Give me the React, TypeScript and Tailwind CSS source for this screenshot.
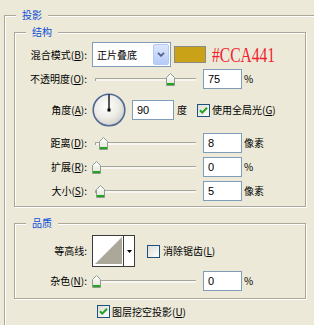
import type { ReactNode } from 'react'

const CJK = "font-['Noto_Sans_CJK_SC',sans-serif]"
const NUM = "font-['Liberation_Sans',sans-serif]"

function Thumb() {
  return (
    <svg width="9" height="13" viewBox="0 0 9 13">
      <defs>
        <linearGradient id="thumbFill" x1="0" y1="0" x2="0" y2="1">
          <stop offset="0" stopColor="#ffffff" />
          <stop offset="1" stopColor="#e2e1d8" />
        </linearGradient>
      </defs>
      <path d="M0.5 4.5 L4.5 0.5 L8.5 4.5 V12.5 H0.5 Z" fill="url(#thumbFill)" stroke="#8e9c8e" />
      <rect x="1" y="10" width="7" height="2" fill="#22a322" />
    </svg>
  )
}

function Slider({ at }: { at: number }) {
  return (
    <div className="relative w-[106px] h-[13px] shrink-0">
      {/* track groove */}
      <div className="absolute left-[3px] right-[2px] top-[5px] h-[3px] border-t border-l border-[#a7a69b] bg-[#f7f6f1]" />
      <div className="absolute top-0" style={{ left: at }}>
        <Thumb />
      </div>
    </div>
  )
}

function NumBox({ value, className = 'w-[39px]' }: { value: string; className?: string }) {
  return (
    <div
      className={`${className} h-[20px] shrink-0 border border-[#7f9db9] bg-white pl-[4px] flex items-center text-[11px] text-black ${NUM}`}
    >
      {value}
    </div>
  )
}

function Check({ on }: { on?: boolean }) {
  return (
    <svg width="13" height="13" viewBox="0 0 13 13" className="shrink-0">
      <defs>
        <linearGradient id="checkFill" x1="0" y1="0" x2="1" y2="1">
          <stop offset="0" stopColor="#dcdcd4" />
          <stop offset="1" stopColor="#ffffff" />
        </linearGradient>
      </defs>
      <rect x="0.5" y="0.5" width="12" height="12" fill="url(#checkFill)" stroke="#1c5180" />
      {on && <path d="M3 6.2 L5.3 8.6 L10 3.8" stroke="#21a121" strokeWidth="2" fill="none" />}
    </svg>
  )
}

function Label({ children }: { children: ReactNode }) {
  return <div className="w-[73px] shrink-0 text-right pr-[1px] text-[10px] leading-[12px] text-black">{children}</div>
}

function Unit({ children, className = 'ml-[2px]' }: { children: ReactNode; className?: string }) {
  return <span className={`${className} text-[10px] leading-[12px] text-black`}>{children}</span>
}

function Legend({ children, className }: { children: ReactNode; className: string }) {
  return (
    <span
      className={`absolute top-[-1px] -translate-y-1/2 ${className} px-[6px] bg-[#ece9d8] text-[10px] leading-[12px] text-[#0b4fd8]`}
    >
      {children}
    </span>
  )
}

function Dial() {
  return (
    <svg width="34" height="34" viewBox="0 0 34 34" className="shrink-0">
      <defs>
        <radialGradient id="dialFill" cx="0.42" cy="0.38" r="0.65">
          <stop offset="0" stopColor="#ffffff" />
          <stop offset="0.6" stopColor="#ecebe6" />
          <stop offset="1" stopColor="#cfcfca" />
        </radialGradient>
      </defs>
      <circle cx="17" cy="17" r="15.8" fill="url(#dialFill)" stroke="#4f6895" strokeWidth="1.6" />
      <line x1="17" y1="1.5" x2="17" y2="17" stroke="#000" strokeWidth="1.3" />
      <rect x="15.5" y="15.5" width="3" height="3" fill="#000" />
    </svg>
  )
}

function Contour() {
  return (
    <div className="w-[43px] h-[32px] shrink-0 border border-[#3a3a3a] bg-white flex">
      <svg width="30" height="30" viewBox="0 0 30 30">
        <path d="M2 28 L29 1 V28 Z" fill="#aca899" />
      </svg>
      <div className="w-[11px] border-l border-[#3a3a3a] flex items-center justify-center">
        <svg width="5" height="3" viewBox="0 0 5 3">
          <path d="M0 0 H5 L2.5 3 Z" fill="#000" />
        </svg>
      </div>
    </div>
  )
}

function Dropdown() {
  return (
    <div className="w-[79px] h-[25px] shrink-0 border border-[#7f9db9] bg-white flex items-center">
      <span className="flex-1 pl-[4px] text-[10px] leading-[12px] text-black">正片叠底</span>
      <div className="w-[16px] h-[21px] mr-[1px] rounded-[2px] border border-[#b5c8f5] bg-gradient-to-b from-[#dbe6fd] to-[#b6cbf8] flex items-center justify-center">
        <svg width="8" height="5" viewBox="0 0 8 5">
          <path d="M1 0.8 L4 3.8 L7 0.8" stroke="#4d6185" strokeWidth="1.8" fill="none" />
        </svg>
      </div>
    </div>
  )
}

export default function App() {
  return (
    <div className={`w-[314px] h-[325px] overflow-hidden bg-[#ece9d8] ${CJK}`}>
      {/* 投影 */}
      <div className="relative ml-[4px] mt-[15px] w-[330px] h-[340px] border border-[#aca899] shadow-[inset_1px_1px_0_#fff,1px_1px_0_#fff] pl-[9px] pt-[16px]">
        <Legend className="left-[11px]">投影</Legend>

        {/* 结构 */}
        <div className="relative w-[292px] border border-[#aca899] shadow-[inset_1px_1px_0_#fff,1px_1px_0_#fff] pt-[9px] pb-[5px]">
          <Legend className="left-[11px]">结构</Legend>

          <div className="h-[25px] flex items-center">
            <Label>
              混合模式(<u>B</u>):
            </Label>
            <div className="ml-[4px]">
              <Dropdown />
            </div>
            <div className="ml-[3px] w-[32px] h-[17px] border border-[#8a8a86] bg-[#c9a218]" />
            <span className="ml-[6px] inline-block origin-left scale-x-[0.74] whitespace-nowrap text-[21px] leading-[22px] text-[#f0202c] font-['Liberation_Serif',serif]">
              #CCA441
            </span>
          </div>

          <div className="mt-[2px] h-[20px] flex items-center">
            <Label>
              不透明度(<u>O</u>):
            </Label>
            <div className="ml-[4px]">
              <Slider at={74} />
            </div>
            <div className="ml-[5px]">
              <NumBox value="75" />
            </div>
            <Unit>%</Unit>
          </div>

          <div className="mt-[4px] h-[34px] flex items-center">
            <Label>
              角度(<u>A</u>):
            </Label>
            <div className="ml-[4px]">
              <Dial />
            </div>
            <div className="ml-[6px]">
              <NumBox value="90" className="w-[42px]" />
            </div>
            <Unit className="ml-[3px]">度</Unit>
            <div className="ml-[10px] flex items-center">
              <Check on />
            </div>
            <Unit>
              使用全局光(<u>G</u>)
            </Unit>
          </div>

          <div className="mt-[6px] h-[20px] flex items-center">
            <Label>
              距离(<u>D</u>):
            </Label>
            <div className="ml-[4px]">
              <Slider at={7} />
            </div>
            <div className="ml-[5px]">
              <NumBox value="8" />
            </div>
            <Unit>像素</Unit>
          </div>

          <div className="mt-[4px] h-[20px] flex items-center">
            <Label>
              扩展(<u>R</u>):
            </Label>
            <div className="ml-[4px]">
              <Slider at={0} />
            </div>
            <div className="ml-[5px]">
              <NumBox value="0" />
            </div>
            <Unit>%</Unit>
          </div>

          <div className="mt-[4px] h-[20px] flex items-center">
            <Label>
              大小(<u>S</u>):
            </Label>
            <div className="ml-[4px]">
              <Slider at={4} />
            </div>
            <div className="ml-[5px]">
              <NumBox value="5" />
            </div>
            <Unit>像素</Unit>
          </div>
        </div>

        {/* 品质 */}
        <div className="relative mt-[16px] w-[292px] border border-[#aca899] shadow-[inset_1px_1px_0_#fff,1px_1px_0_#fff] pt-[11px] pb-[7px]">
          <Legend className="left-[11px]">品质</Legend>

          <div className="h-[32px] flex items-center">
            <Label>等高线:</Label>
            <div className="ml-[4px]">
              <Contour />
            </div>
            <div className="ml-[12px] flex items-center">
              <Check />
            </div>
            <Unit className="ml-[3px]">
              消除锯齿(<u>L</u>)
            </Unit>
          </div>

          <div className="mt-[4px] h-[20px] flex items-center">
            <Label>
              杂色(<u>N</u>):
            </Label>
            <div className="ml-[4px]">
              <Slider at={0} />
            </div>
            <div className="ml-[5px]">
              <NumBox value="0" />
            </div>
            <Unit>%</Unit>
          </div>
        </div>

        <div className="mt-[6px] h-[13px] ml-[83px] flex items-center">
          <Check on />
          <Unit>
            图层挖空投影(<u>U</u>)
          </Unit>
        </div>
      </div>
    </div>
  )
}
